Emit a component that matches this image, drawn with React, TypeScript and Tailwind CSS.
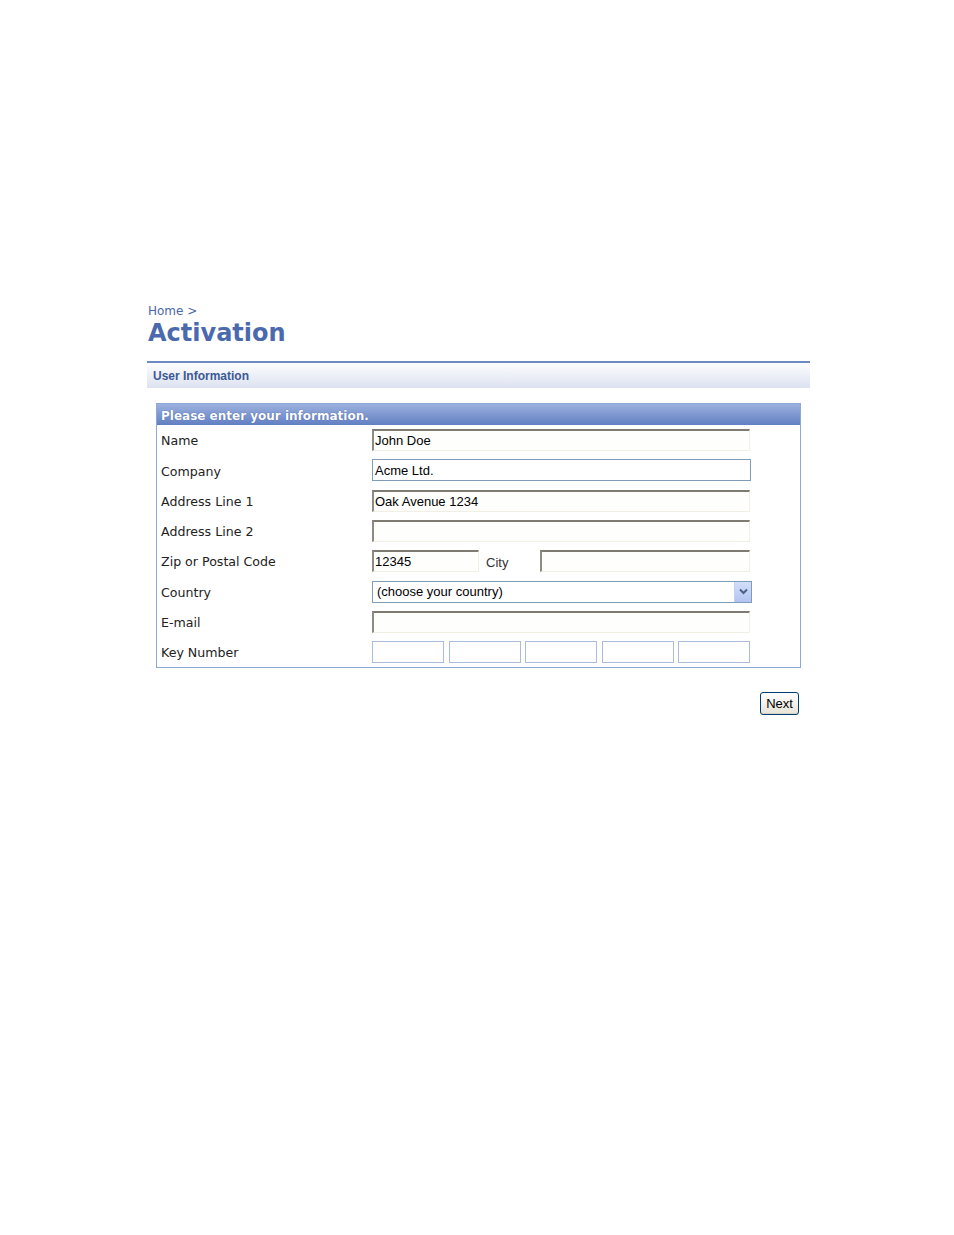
import React from "react";

const labelFont = { fontFamily: '"DejaVu Sans", Verdana, sans-serif' };

function TextBox({ value, w = "w-[378px]" }: { value?: string; w?: string }) {
  return (
    <div
      className={`${w} h-[22px] border-t-2 border-l-2 border-t-[#7d7b72] border-l-[#8d8b83] border-r border-b border-r-[#f1efe4] border-b-[#f1efe4] bg-[#fefefc] flex items-center pl-[1px] text-[13px] text-black font-['Liberation_Sans',Arial,sans-serif] leading-none`}
    >
      {value}
    </div>
  );
}

function Row({ label, children }: { label: string; children: React.ReactNode }) {
  return (
    <div className="flex items-center h-[30.3px]">
      <div className="w-[211px] text-[12.6px] text-[#222] pt-[3px]" style={labelFont}>
        {label}
      </div>
      {children}
    </div>
  );
}

export default function App() {
  return (
    <div className="w-[954px] h-[1235px] bg-white">
      <div className="pt-[304px] pl-[147px] w-[810px]">
        <div className="pl-[1px] text-[12px] leading-[15px] text-[#4a68a6]" style={labelFont}>
          Home &gt;
        </div>
        <h1
          className="pl-[1px] mt-[2px] text-[24px] leading-[25px] font-bold text-[#4b6aae]"
          style={labelFont}
        >
          Activation
        </h1>
        <div className="mt-[15px] w-[663px] border-t-2 border-[#6f8bc5]">
          <div className="h-[25px] bg-gradient-to-b from-[#fcfdfe] to-[#dde2f0] flex items-center pl-[6px] pt-[1px] text-[12px] font-bold text-[#3c5995] font-['Liberation_Sans',Arial,sans-serif]">
            User Information
          </div>
        </div>

        <div className="ml-[9px] mt-[15px] w-[645px] border border-[#8fa7d8] bg-white">
          <div
            className="h-[21px] bg-gradient-to-b from-[#9db1df] to-[#627fc2] flex items-center pl-[4px] pt-[2px] text-[12px] font-bold text-white [text-shadow:0_0_1px_#3a5290]"
            style={labelFont}
          >
            Please enter your information.
          </div>
          <div className="pl-[4px]">
            <Row label="Name">
              <TextBox value="John Doe" />
            </Row>
            <Row label="Company">
              <div className="w-[379px] h-[22px] border border-[#7f9db9] bg-white flex items-center pl-[2px] text-[13px] text-black font-['Liberation_Sans',Arial,sans-serif] leading-none">
                Acme Ltd.
              </div>
            </Row>
            <Row label="Address Line 1">
              <TextBox value="Oak Avenue 1234" />
            </Row>
            <Row label="Address Line 2">
              <TextBox />
            </Row>
            <Row label="Zip or Postal Code">
              <div className="flex items-center">
                <TextBox value="12345" w="w-[107px]" />
                <div className="w-[61px] pl-[7px] pt-[3px] text-[13px] text-[#333] font-['Liberation_Sans',Arial,sans-serif]">
                  City
                </div>
                <TextBox w="w-[210px]" />
              </div>
            </Row>
            <Row label="Country">
              <div className="w-[380px] h-[22px] border border-[#7f9db9] bg-white flex items-center justify-between">
                <span className="pl-[4px] text-[13px] text-black font-['Liberation_Sans',Arial,sans-serif]">
                  (choose your country)
                </span>
                <div className="w-[17px] h-[20px] bg-gradient-to-b from-[#d3defa] to-[#b2c5f1] border-l border-[#c4d2f2] flex items-center justify-center">
                  <svg width="9" height="7" viewBox="0 0 9 7">
                    <path d="M1 1.5 L4.5 5 L8 1.5" fill="none" stroke="#4d6185" strokeWidth="2" />
                  </svg>
                </div>
              </div>
            </Row>
            <Row label="E-mail">
              <TextBox />
            </Row>
            <Row label="Key Number">
              <div className="flex gap-[4.5px]">
                {[0, 1, 2, 3, 4].map((i) => (
                  <div key={i} className="w-[72px] h-[22px] border border-[#a9bddb] bg-white" />
                ))}
              </div>
            </Row>
          </div>
        </div>

        <div className="w-[663px] flex justify-end pr-[11px] mt-[24px]">
          <button className="w-[39px] h-[23px] rounded-[3px] border border-[#003c74] bg-gradient-to-b from-[#ffffff] to-[#e6e3d6] text-[13px] text-black font-['Liberation_Sans',Arial,sans-serif] leading-none shadow-[inset_0_-1px_0_#d6d0c5]">
            Next
          </button>
        </div>
      </div>
    </div>
  );
}
